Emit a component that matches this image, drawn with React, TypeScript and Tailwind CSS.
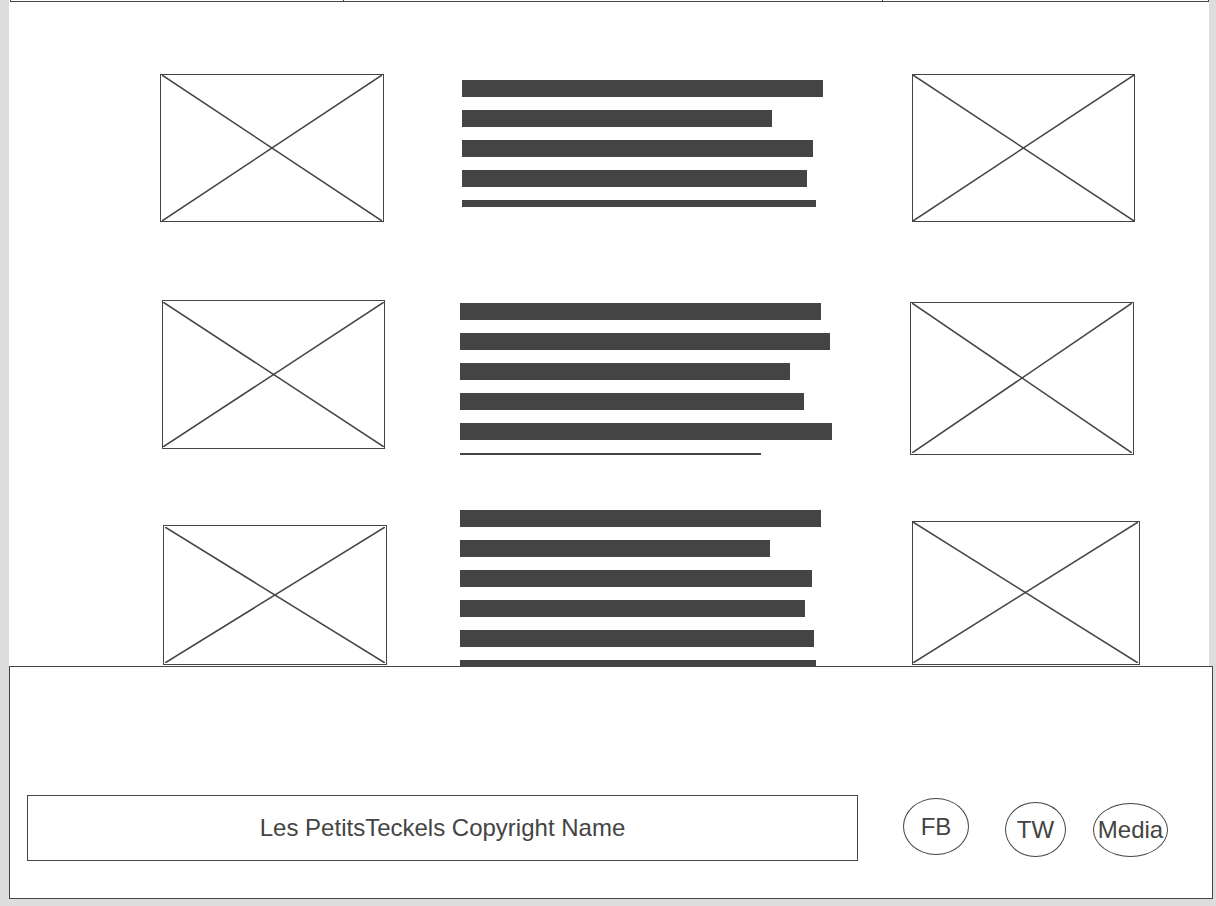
type FrameProps = { className: string };

function ImageFrame({ className }: FrameProps) {
  return (
    <div role="img" aria-label="Image placeholder" className={`border border-[#444] ${className}`}>
      <svg
        className="block h-full w-full"
        viewBox="0 0 100 100"
        preserveAspectRatio="none"
        fill="none"
        stroke="#444"
        strokeWidth="1.5"
      >
        <path d="M0 0 L100 100" vectorEffect="non-scaling-stroke" />
        <path d="M100 0 L0 100" vectorEffect="non-scaling-stroke" />
      </svg>
    </div>
  );
}

function TextBlock({ widths, className }: { widths: number[]; className: string }) {
  return (
    <div className={`flex flex-col gap-[13px] overflow-hidden ${className}`}>
      {widths.map((width, i) => (
        <div key={i} className="h-[17px] shrink-0 bg-[#444]" style={{ width }} />
      ))}
    </div>
  );
}

const social = [
  { name: "FB", className: "h-[57px] w-[66px] self-start" },
  { name: "TW", className: "ml-9 h-[55px] w-[61px] self-end" },
  { name: "Media", className: "ml-[27px] h-[54px] w-[75px] self-end" },
];

export default function App() {
  return (
    <div className="min-h-screen bg-[#ddd] pr-[3px] pl-[9px] font-['Liberation_Sans',Arial,sans-serif] text-2xl text-[#444]">
      <div className="mr-1 bg-white">
        <header className="ml-px grid h-[2px] grid-cols-[333fr_539fr_325fr] border-x border-b border-[#444]">
          <div className="border-r border-[#444]" />
          <div className="border-r border-[#444]" />
          <div />
        </header>

        <main className="flex items-start justify-between pt-[72px] pr-[69px] pl-[151px]">
          <section className="flex w-[227px] flex-col">
            <ImageFrame className="h-[148px] w-[224px] px-px" />
            <ImageFrame className="mt-[78px] h-[149px] w-[223px] self-center py-px" />
            <ImageFrame className="mt-[76px] h-[140px] w-[224px] self-end p-px" />
          </section>

          <section className="flex w-[377px] flex-col pt-[6px]">
            <TextBlock className="h-[127px] w-[375px] self-end" widths={[361, 310, 351, 345, 354]} />
            <TextBlock className="mt-24 h-[152px]" widths={[361, 370, 330, 344, 372, 301]} />
            <TextBlock className="mt-[55px] h-[156px]" widths={[361, 310, 352, 345, 354, 356]} />
          </section>

          <section className="flex w-[230px] flex-col">
            <div className="w-[228px] self-end">
              <ImageFrame className="h-[148px] w-[223px]" />
            </div>
            <ImageFrame className="mt-20 h-[153px] w-[224px] px-px pb-px" />
            <ImageFrame className="mt-[66px] h-[144px] w-[228px] self-end pr-px pb-px" />
          </section>
        </main>
      </div>

      <footer className="flex items-start border border-[#444] bg-white pt-32 pr-11 pb-[37px] pl-[17px]">
        <p className="flex h-[66px] flex-1 items-center justify-center border border-[#444]">
          Les PetitsTeckels Copyright Name
        </p>
        <nav aria-label="Social media" className="ml-[45px] flex h-[62px] pt-[3px]">
          {social.map((item) => (
            <a
              key={item.name}
              href="#"
              className={`flex items-center justify-center rounded-[50%] border border-[#444] ${item.className}`}
            >
              {item.name}
            </a>
          ))}
        </nav>
      </footer>
    </div>
  );
}
